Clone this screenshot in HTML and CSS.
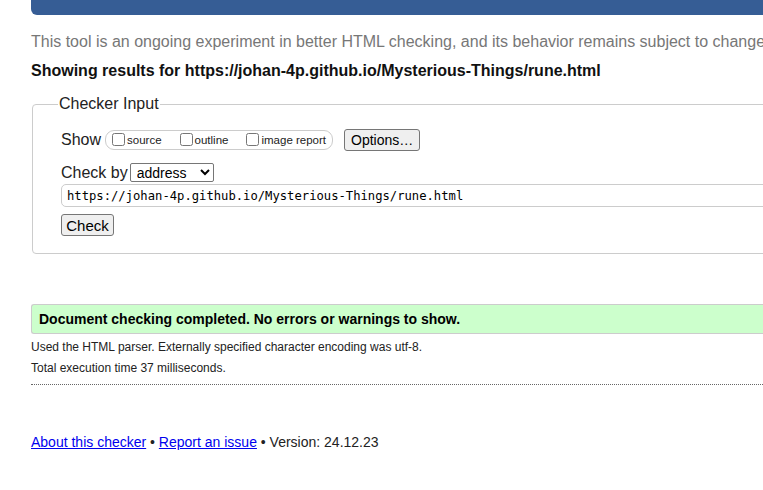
FILE: index.html
```html
<!DOCTYPE html>
<html>
<head>
<meta charset="utf-8">
<title>Nu Html Checker</title>
<link rel="stylesheet" href="styles.css">
</head>
<body>
<div class="page">
  <div class="header"></div>
  <p class="intro">This tool is an ongoing experiment in better HTML checking, and its behavior remains subject to change</p>
  <p class="showing">Showing results for https://johan-4p.github.io/Mysterious-Things/rune.html</p>
  <fieldset class="input">
    <legend>Checker Input</legend>
    <div class="row show-row">
      <span class="label">Show</span>
      <span class="group">
        <label class="opt"><input type="checkbox">source</label>
        <label class="opt"><input type="checkbox">outline</label>
        <label class="opt"><input type="checkbox">image report</label>
      </span>
      <button class="btn options">Options…</button>
    </div>
    <div class="row by-row">
      <span class="label">Check by</span>
      <select class="sel"><option>address</option></select>
    </div>
    <input class="url" type="text" value="https://johan-4p.github.io/Mysterious-Things/rune.html">
    <div class="row"><button class="btn check">Check</button></div>
  </fieldset>
  <div class="success">Document checking completed. No errors or warnings to show.</div>
  <p class="details">Used the HTML parser. Externally specified character encoding was utf-8.</p>
  <p class="details">Total execution time 37 milliseconds.</p>
  <hr class="sep">
  <p class="footer"><a href="#">About this checker</a> • <a href="#">Report an issue</a> • Version: 24.12.23</p>
</div>
</body>
</html>
```

FILE: styles.css
```css
html, body {
  margin: 0;
  padding: 0;
  background: #fff;
  overflow: hidden;
}
body {
  font-family: "Liberation Sans", Arial, sans-serif;
  color: #222;
}
.page {
  width: 1000px;
  padding-left: 31px;
}
.header {
  height: 15px;
  background: #365d95;
  border-bottom-left-radius: 6px;
}
.intro {
  margin: 18px 0 0;
  font-size: 16px;
  line-height: 18px;
  color: #777;
  white-space: nowrap;
}
.showing {
  margin: 11px 0 0;
  font-size: 16px;
  line-height: 18px;
  font-weight: bold;
  color: #111;
  white-space: nowrap;
}
.input {
  margin: 15px 0 0 1px;
  padding: 8px 28px 17px 28px;
  border: 1px solid #ccc;
  border-radius: 4px;
  min-width: 0;
}
.input legend {
  padding: 0 1px;
  font-size: 16px;
  line-height: 18px;
  color: #222;
  margin-left: -3px;
}
.row {
  display: flex;
  align-items: center;
}
.label {
  font-size: 16px;
  line-height: 18px;
  margin-right: 4px;
}
.show-row {
  margin-top: 8px;
}
.group {
  display: flex;
  align-items: center;
  height: 18px;
  border: 1px solid #ccc;
  border-radius: 9px;
  padding: 0 6px 0 5px;
}
.opt {
  display: flex;
  align-items: center;
  font-size: 11.5px;
  margin-right: 17px;
}
.opt:last-child {
  margin-right: 0;
}
.opt input {
  margin: 0 2px 0 1px;
  width: 13px;
  height: 13px;
  position: relative;
  top: -1px;
}
.btn {
  font-family: "Liberation Sans", Arial, sans-serif;
  background: #efefef;
  border: 1px solid #767676;
  border-radius: 3px;
  color: #000;
  padding: 0 6px;
  height: 22px;
  box-sizing: border-box;
}
.options {
  margin-left: 11px;
  font-size: 14px;
  width: 76px;
}
.by-row {
  margin-top: 12px;
}
.sel {
  font-family: "Liberation Sans", Arial, sans-serif;
  font-size: 14px;
  width: 84px;
  height: 19px;
  margin-left: -2px;
  padding: 0 2px;
  border: 1px solid #767676;
  border-radius: 2px;
  background: #fff;
  color: #000;
}
.url {
  display: block;
  box-sizing: border-box;
  width: 950px;
  height: 23px;
  margin: 2px 0 0;
  padding: 0 5px;
  border: 1px solid #ccc;
  border-radius: 5px;
  font-family: "DejaVu Sans Mono", "Liberation Mono", monospace;
  font-size: 12.2px;
  color: #000;
  background: #fff;
  outline: none;
}
.check {
  margin-top: 7px;
  width: 53px;
  font-size: 15px;
  padding: 0 4px;
}
.success {
  margin-top: 50px;
  height: 30px;
  box-sizing: border-box;
  border: 1px solid #ccc;
  border-right: none;
  border-radius: 3px 0 0 3px;
  background: #ccffcc;
  padding: 0 0 0 7px;
  display: flex;
  align-items: center;
  font-size: 14px;
  font-weight: bold;
  color: #000;
}
.details {
  margin: 6px 0 0;
  font-size: 12px;
  line-height: 15px;
  color: #222;
}
.details + .details {
  margin-top: 6px;
}
.sep {
  margin: 8px 0 0;
  border: none;
  border-top: 1px dotted #666;
  height: 0;
}
.footer {
  margin: 49px 0 0;
  font-size: 14px;
  line-height: 16px;
  color: #222;
}
.footer a {
  color: #00e;
}
```
